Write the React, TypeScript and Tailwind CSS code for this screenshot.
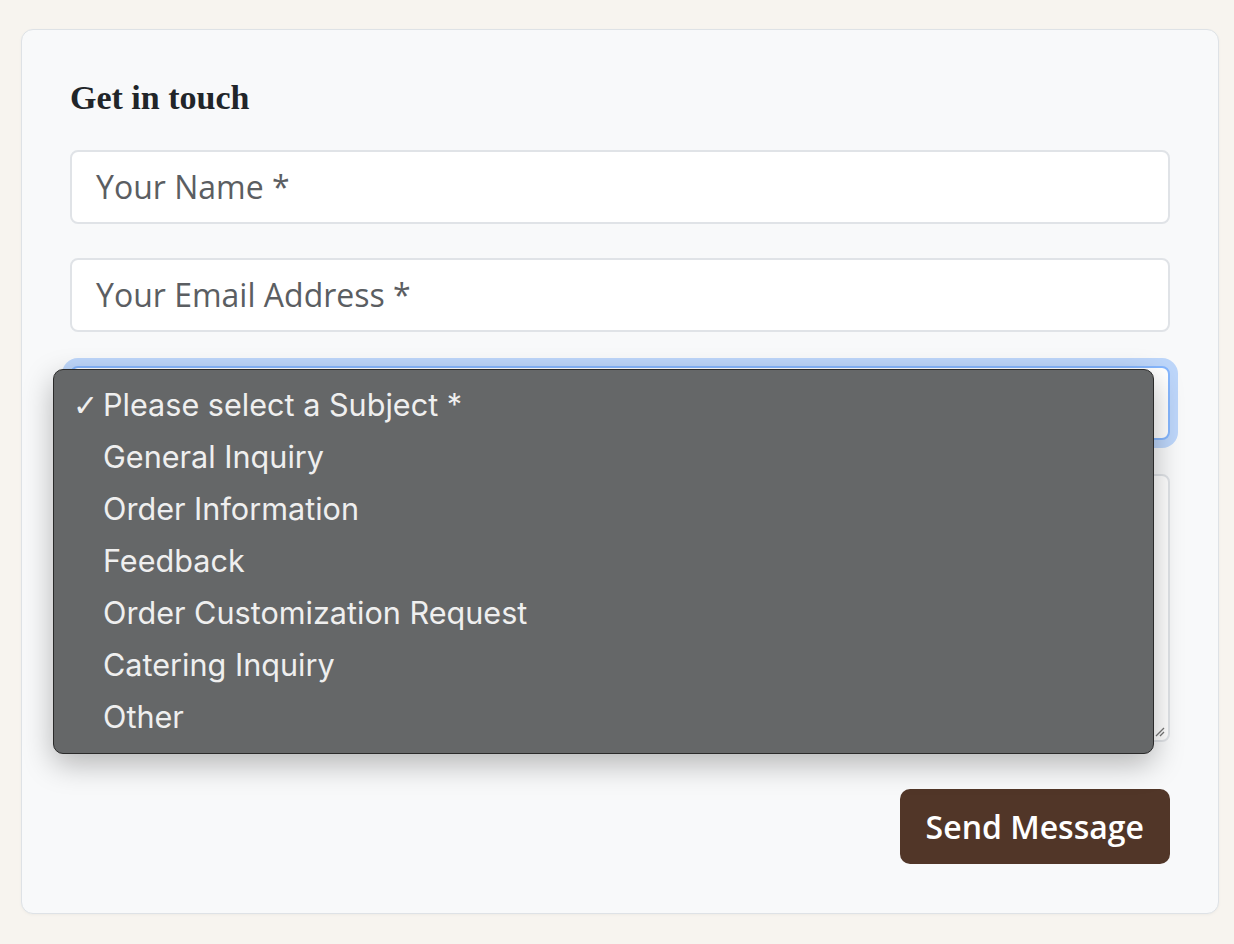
import React from "react";

const options = [
  "Please select a Subject *",
  "General Inquiry",
  "Order Information",
  "Feedback",
  "Order Customization Request",
  "Catering Inquiry",
  "Other",
];

export default function App() {
  return (
    <div className="min-h-[944px] w-full bg-[#f7f4ef] pl-[21px] pr-[15px] pt-[29px] pb-[29px]">
      <div className="rounded-[12px] border border-[#dee2e6] bg-[#f8f9fa] px-[48px] pt-[48px] pb-[49px] shadow-[0_1px_3px_rgba(0,0,0,0.04)]">
        <h2
          className="mb-[32px] text-[34px] font-bold leading-[40px] text-[#212529]"
          style={{ fontFamily: '"Liberation Serif", "DejaVu Serif", serif' }}
        >
          Get in touch
        </h2>
        <div className="flex flex-col gap-[34px]" style={{ fontFamily: '"Open Sans", sans-serif' }}>
          <div className="flex h-[74px] items-center rounded-[8px] border-2 border-[#e0e3e7] bg-white px-[24px] text-[32px] text-[#5b5e62]">
            Your Name *
          </div>
          <div className="flex h-[74px] items-center rounded-[8px] border-2 border-[#e0e3e7] bg-white px-[24px] text-[32px] text-[#5b5e62]">
            Your Email Address *
          </div>
          <div className="relative">
            <div className="h-[74px] rounded-[8px] border-2 border-[#86b7fe] bg-white shadow-[0_0_0_8px_rgba(13,110,253,0.25)]" />
            <div
              className="absolute left-[-17px] top-[3px] z-10 h-[385px] w-[1101px] rounded-[10px] border border-[#2a2a2a] bg-[#656768] pt-[9px] shadow-[0_10px_30px_rgba(0,0,0,0.28)]"
              style={{ fontFamily: 'Inter, "Liberation Sans", Arial, sans-serif' }}
            >
              {options.map((o, i) => (
                <div key={o} className="relative flex h-[52px] items-center pl-[49px] text-[30.6px] text-[#efefef]">
                  {i === 0 && (
                    <span
                      className="absolute left-[19px] text-[30px] font-bold"
                      style={{ fontFamily: '"DejaVu Sans", sans-serif' }}
                    >
                      ✓
                    </span>
                  )}
                  {o}
                </div>
              ))}
            </div>
          </div>
          <div className="relative h-[268px] rounded-[8px] border-2 border-[#e0e3e7] bg-white">
            <svg className="absolute bottom-[3px] right-[3px]" width="12" height="12" viewBox="0 0 12 12">
              <path d="M11 3 L3 11 M11 7 L7 11" stroke="#777" strokeWidth="1.3" />
            </svg>
          </div>
        </div>
        <div className="mt-[47px] flex justify-end">
          <button
            className="h-[75px] rounded-[10px] bg-[#513628] px-[26px] text-[32px] font-semibold text-white"
            style={{ fontFamily: '"Open Sans", sans-serif' }}
          >
            Send Message
          </button>
        </div>
      </div>
    </div>
  );
}
